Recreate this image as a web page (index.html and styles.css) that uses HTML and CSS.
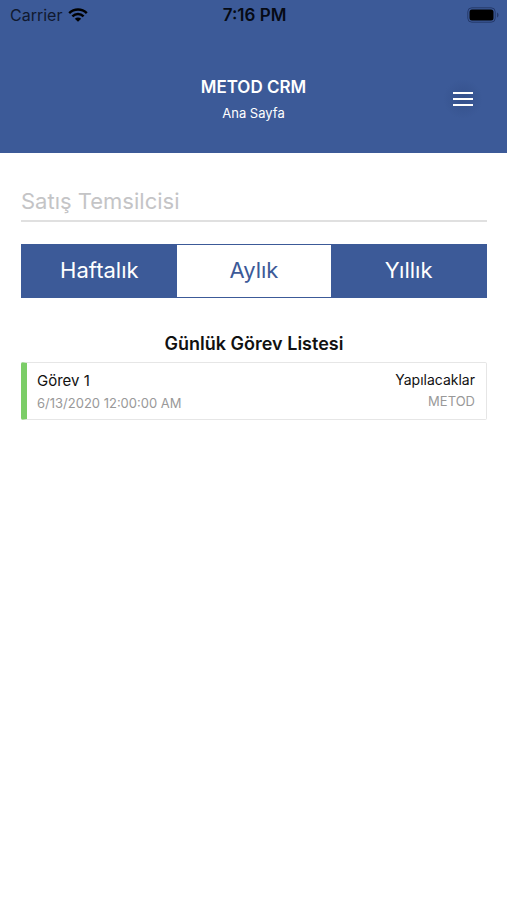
FILE: index.html
```html
<!DOCTYPE html>
<html lang="tr">
<head>
<meta charset="utf-8">
<meta name="viewport" content="width=device-width, initial-scale=1">
<title>METOD CRM</title>
<link rel="stylesheet" href="styles.css">
</head>
<body>
<header class="header">
  <div class="status">
    <div class="carrier"><span>Carrier</span>
      <svg class="wifi" viewBox="0 0 20 14" aria-hidden="true">
        <path d="M1.2 5.2C6.2.4 13.8.4 18.8 5.2M4.4 8.3c3.2-3 8-3 11.2 0" fill="none" stroke="currentColor" stroke-width="2.5"/>
        <path d="M10 13.8 6.8 10.7c1.8-1.6 4.6-1.6 6.4 0z" fill="currentColor"/>
      </svg>
    </div>
    <time class="clock">7:16 PM</time>
    <svg class="battery" viewBox="0 0 32 16" aria-hidden="true">
      <rect x=".8" y=".8" width="27.4" height="14.4" rx="4" fill="none" stroke="#25396a" stroke-width="1"/>
      <rect x="2.5" y="2.5" width="24" height="11" rx="2.5" fill="#000"/>
      <path d="M30 5.500v5c2-.8 2-4.200 0-5z" fill="#25396a"/>
    </svg>
  </div>
  <div class="bar">
    <div class="titles">
      <h1 class="title">METOD CRM</h1>
      <p class="subtitle">Ana Sayfa</p>
    </div>
    <button class="menu" type="button" aria-label="Menü">
      <svg class="menu-icon" viewBox="0 0 20 16" aria-hidden="true"><path d="M0 2h20M0 8h20M0 14h20" stroke="currentColor" stroke-width="2"/></svg>
    </button>
  </div>
</header>
<main class="content">
  <input class="field" type="text" placeholder="Satış Temsilcisi" aria-label="Satış Temsilcisi">
  <div class="segments" role="group" aria-label="Dönem">
    <button class="segment" type="button">Haftalık</button>
    <button class="segment active" type="button" aria-pressed="true">Aylık</button>
    <button class="segment" type="button">Yıllık</button>
  </div>
  <h2 class="heading">Günlük Görev Listesi</h2>
  <article class="task">
    <div class="task-main">
      <h3 class="task-name">Görev 1</h3>
      <time class="task-meta">6/13/2020 12:00:00 AM</time>
    </div>
    <div class="task-side">
      <p class="task-state">Yapılacaklar</p>
      <p class="task-meta">METOD</p>
    </div>
  </article>
</main>
</body>
</html>
```
FILE: styles.css
```css
* {
  box-sizing: border-box;
}

body {
  margin: 0;
  background: #fff;
  color: #111;
  font-family: Inter, "Liberation Sans", sans-serif;
}

h1, h2, h3, p {
  margin: 0;
}

button {
  font: inherit;
  cursor: pointer;
}

.header {
  background: #3c5a98;
  color: #fff;
  padding-bottom: 31px;
}

.status {
  display: grid;
  grid-template-columns: 1fr auto 1fr;
  align-items: center;
  height: 30px;
  padding: 0 8px 0 10px;
  color: #000;
  font-size: 16px;
}

.carrier {
  display: flex;
  align-items: center;
  gap: 6px;
  color: #10192f;
}

.wifi {
  width: 20px;
  height: 14px;
  color: #000;
}

.clock {
  font-size: 17px;
  font-weight: 600;
  line-height: 20px;
  color: #060a14;
}

.battery {
  justify-self: end;
  width: 32px;
  height: 16px;
}

.bar {
  display: grid;
  grid-template-columns: 1fr auto 1fr;
  align-items: center;
  padding: 45px 24px 0;
}

.titles {
  grid-column: 2;
  text-align: center;
}

.title {
  font-size: 17px;
  font-weight: 600;
  line-height: 24px;
}

.subtitle {
  font-size: 13px;
  line-height: 18px;
  margin-top: 5px;
}

.menu {
  justify-self: end;
  display: grid;
  place-items: center;
  width: 40px;
  height: 40px;
  padding: 0;
  border: 0;
  border-radius: 50%;
  background: radial-gradient(#35518c, #3c5a98 70%);
  color: #fff;
}

.menu-icon {
  width: 20px;
  height: 16px;
}

.content {
  padding: 28px 20px 28px 21px;
}

.field {
  display: block;
  width: 100%;
  height: 41px;
  padding: 0;
  border: 0;
  border-bottom: 2px solid #e0e0e0;
  border-radius: 0;
  outline: 0;
  background: transparent;
  color: #111;
  font: 22px Inter, "Liberation Sans", sans-serif;
}

.field::placeholder {
  color: #c4c4c6;
  opacity: 1;
}

.segments {
  display: grid;
  grid-template-columns: repeat(3, 1fr);
  margin-top: 22px;
  border: 1px solid #3c5a98;
}

.segment {
  height: 52px;
  padding: 0 0 2px;
  border: 0;
  background: #3c5a98;
  color: #fff;
  font-size: 22px;
}

.segment.active {
  background: #fff;
  color: #3c5a98;
}

.heading {
  margin-top: 34px;
  font-size: 18px;
  font-weight: 600;
  line-height: 24px;
  text-align: center;
}

.task {
  display: flex;
  justify-content: space-between;
  margin-top: 6px;
  padding: 8px 11px 7px 10px;
  border: 1px solid #e6e6e6;
  border-left: 6px solid #7bcd67;
  border-radius: 2px;
}

.task-name {
  font-size: 15px;
  font-weight: 400;
  line-height: 20px;
}

.task-meta {
  display: block;
  color: #999;
  font-size: 13px;
  line-height: 18px;
  margin-top: 3px;
}

.task-side {
  text-align: right;
}

.task-state {
  font-size: 14px;
  line-height: 18px;
}
```
